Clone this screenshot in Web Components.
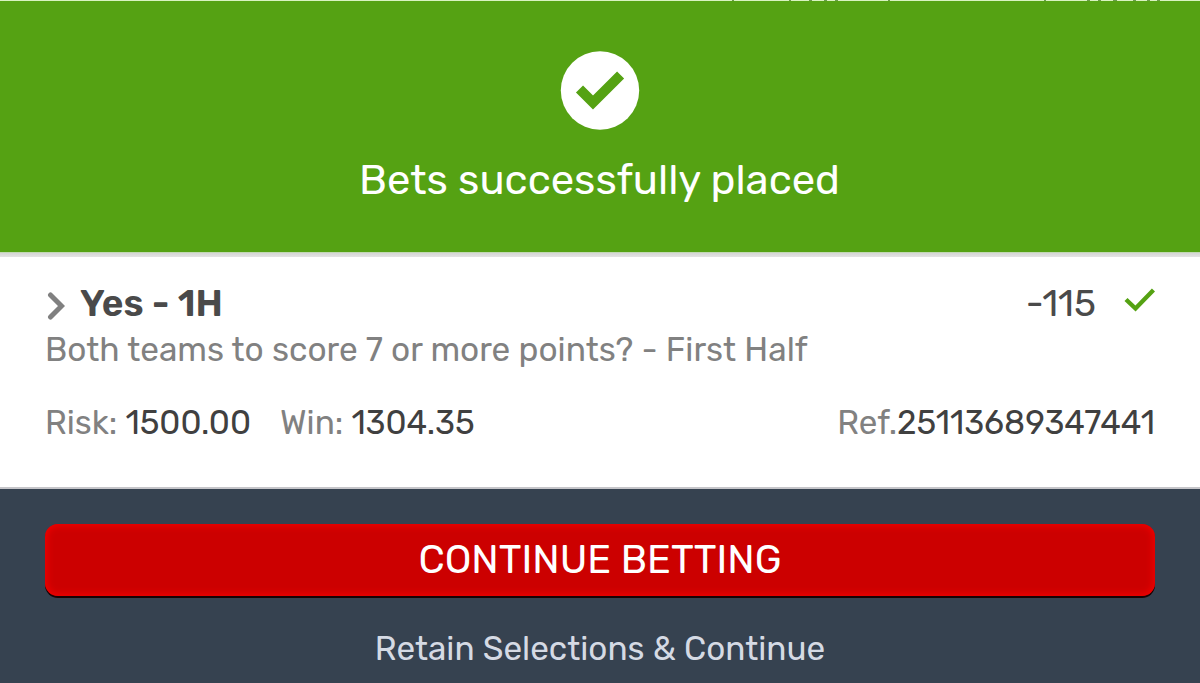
<!DOCTYPE html>
<html lang="en">
<head>
<meta charset="utf-8">
<title>Bet receipt</title>
<style>
body {
    margin: 0;
    background: #364250;
    font-family: Rubik, Roboto, sans-serif;
}
</style>
</head>
<body>
<bet-receipt>
    <success-banner slot="banner">Bets successfully placed</success-banner>
    <bet-item>
        <span slot="name">Yes - 1H</span>
        <span slot="odds">-115</span>
        <span slot="market">Both teams to score 7 or more points? - First Half</span>
        <span slot="risk">1500.00</span>
        <span slot="win">1304.35</span>
        <span slot="reference">25113689347441</span>
    </bet-item>
    <receipt-actions slot="actions">
        <span slot="primary">CONTINUE BETTING</span>
        <span slot="secondary">Retain Selections &amp; Continue</span>
    </receipt-actions>
</bet-receipt>

<script>
const receiptTemplate = document.createElement('template');
receiptTemplate.innerHTML = `
<style>
:host {
    display: grid;
    grid-template-rows: 252px 237px 194px;
    height: 683px;
    overflow: hidden;
}
</style>
<slot name="banner"></slot>
<slot></slot>
<slot name="actions"></slot>
`;

const bannerTemplate = document.createElement('template');
bannerTemplate.innerHTML = `
<style>
:host {
    display: flex;
    flex-direction: column;
    align-items: center;
    background: #55a213;
    color: #fff;
}

/* sliver of the page behind the receipt */
.edge {
    display: block;
    width: 1200px;
    height: 1px;
    background: #d9f3c0;
}

.icon {
    display: block;
    width: 80px;
    height: 79px;
    margin-top: 50px;
}

.message {
    margin-top: 25px;
    padding-right: 1px;
    font-size: 41.8px;
    line-height: 50px;
    white-space: nowrap;
}
</style>
<svg class="edge" viewBox="0 0 1200 1">
    <path d="M732 .5h2M789 .5h2M809 .5h3M824 .5h3M835 .5h3M888 .5h2M1044 .5h2M1087 .5h3M1098 .5h3M1113 .5h4M1133 .5h3M1147 .5h3M1157 .5h3" stroke="#6a9a4c" stroke-width="1"/>
</svg>
<svg class="icon" viewBox="0 0 80 79">
    <circle cx="40" cy="39.5" r="39.2" fill="#fff"/>
    <path d="M19.5 38 33 51.5 60.6 24" fill="none" stroke="#55a213" stroke-width="10"/>
</svg>
<div class="message"><slot></slot></div>
`;

const itemTemplate = document.createElement('template');
itemTemplate.innerHTML = `
<style>
:host {
    display: block;
    box-sizing: border-box;
    padding: 27px 45px 0;
    border-top: 1px solid #c3d8b4;
    border-bottom: 2px solid #c5c5c9;
    background: linear-gradient(#d5d5d5, #e4e4e4 4px, #fff 4px);
    color: #818181;
    font-size: 33.2px;
    white-space: nowrap;
}

.title, .amounts {
    display: flex;
    align-items: center;
}

.title {
    height: 46px;
    color: #4a4a4a;
    font-size: 37.1px;
}

.arrow {
    width: 20px;
    height: 30px;
    margin: 6px 15px 0 0;
}

.name {
    font-weight: 600;
}

.odds {
    margin-left: auto;
}

.tick {
    width: 32px;
    height: 26px;
    margin: 0 0 7px 27px;
}

.market {
    height: 47px;
    font-size: 33.4px;
    line-height: 48px;
}

.amounts {
    height: 46px;
    margin-top: 26px;
}

.win {
    margin-left: 29px;
}

.reference {
    margin-left: auto;
}

b {
    color: #404040;
    font-weight: 400;
}
</style>
<div class="title">
    <svg class="arrow" viewBox="0 0 20 30"><path d="M5.5 4 16.5 15 5.5 26" fill="none" stroke="#808080" stroke-width="5" stroke-linecap="round"/></svg>
    <span class="name"><slot name="name"></slot></span>
    <span class="odds"><slot name="odds"></slot></span>
    <svg class="tick" viewBox="0 0 32 26"><path d="M3 12.5 12.5 21.5 30.5 3" fill="none" stroke="#55a213" stroke-width="4.4"/></svg>
</div>
<div class="market"><slot name="market"></slot></div>
<div class="amounts">
    <span class="risk">Risk: <b><slot name="risk"></slot></b></span>
    <span class="win">Win: <b><slot name="win"></slot></b></span>
    <span class="reference">Ref.<b><slot name="reference"></slot></b></span>
</div>
`;

const actionsTemplate = document.createElement('template');
actionsTemplate.innerHTML = `
<style>
:host {
    display: block;
    box-sizing: border-box;
    padding: 35px 45px 0;
    background: #364250;
}

button {
    display: block;
    width: 100%;
    margin: 0;
    padding: 0;
    border: 0;
    background: none;
    font-family: inherit;
    white-space: nowrap;
}

.primary {
    height: 72px;
    border-radius: 13px;
    background: #c00;
    box-shadow: inset 0 0 7px 2px #f00000, 0 2px 0 #190305;
    color: #fff;
    font-size: 39.4px;
    line-height: 72px;
}

.secondary {
    height: 46px;
    margin-top: 30px;
    color: #d5dae4;
    font-size: 33.3px;
    line-height: 46px;
}
</style>
<button class="primary"><slot name="primary"></slot></button>
<button class="secondary"><slot name="secondary"></slot></button>
`;

class BetReceipt extends HTMLElement {
    connectedCallback() {
        const shadowRoot = this.attachShadow({ mode: 'open' });
        shadowRoot.appendChild(receiptTemplate.content.cloneNode(true));
    }
}

class SuccessBanner extends HTMLElement {
    connectedCallback() {
        const shadowRoot = this.attachShadow({ mode: 'open' });
        shadowRoot.appendChild(bannerTemplate.content.cloneNode(true));
    }
}

class BetItem extends HTMLElement {
    connectedCallback() {
        const shadowRoot = this.attachShadow({ mode: 'open' });
        shadowRoot.appendChild(itemTemplate.content.cloneNode(true));
    }
}

class ReceiptActions extends HTMLElement {
    connectedCallback() {
        const shadowRoot = this.attachShadow({ mode: 'open' });
        shadowRoot.appendChild(actionsTemplate.content.cloneNode(true));
    }
}

customElements.define('bet-receipt', BetReceipt);
customElements.define('success-banner', SuccessBanner);
customElements.define('bet-item', BetItem);
customElements.define('receipt-actions', ReceiptActions);
</script>
</body>
</html>
